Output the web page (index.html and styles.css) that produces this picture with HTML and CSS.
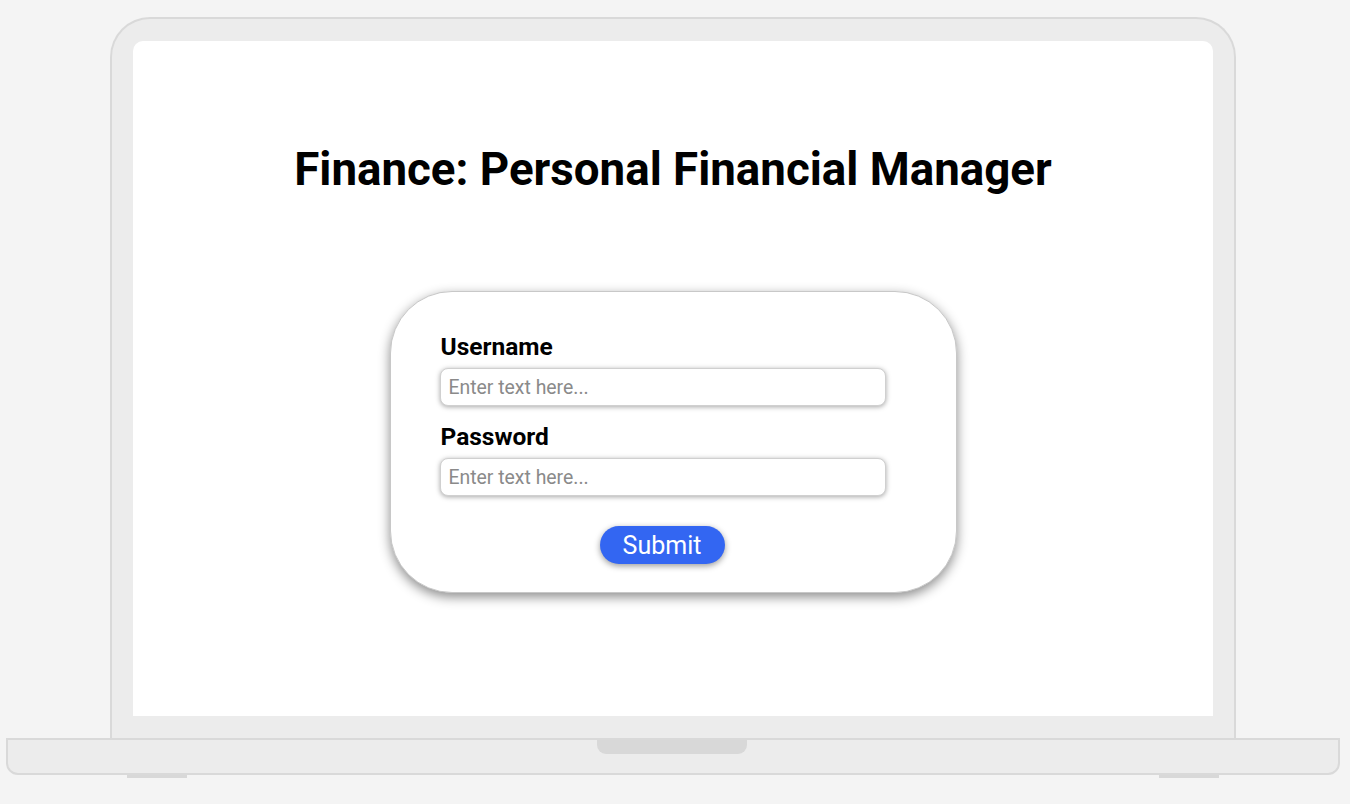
FILE: index.html
```html
<!DOCTYPE html>
<html>
<head>
<meta charset="utf-8">
<link rel="stylesheet" href="styles.css">
</head>
<body>
<div class="laptop">
  <div class="lid">
    <div class="screen">
      <h1 class="title">Finance: Personal Financial Manager</h1>
      <form class="card">
        <label class="label">Username</label>
        <input class="field" type="text" placeholder="Enter text here...">
        <label class="label">Password</label>
        <input class="field" type="password" placeholder="Enter text here...">
        <button class="submit" type="button">Submit</button>
      </form>
    </div>
  </div>
  <div class="base">
    <div class="notch"></div>
  </div>
  <div class="feet">
    <div class="foot"></div>
    <div class="foot"></div>
  </div>
</div>
</body>
</html>
```
FILE: styles.css
```css
html, body {
  margin: 0;
  padding: 0;
  background: #f4f4f4;
  font-family: Roboto, "Noto Sans", sans-serif;
}
.laptop {
  width: 1350px;
  height: 804px;
  padding-top: 17px;
  box-sizing: border-box;
  display: flex;
  flex-direction: column;
  align-items: flex-start;
}
.lid {
  margin-left: 110px;
  width: 1126px;
  height: 721px;
  box-sizing: border-box;
  background: #ececec;
  border: 2px solid #d9d9d9;
  border-bottom: none;
  border-radius: 40px 40px 0 0;
  padding: 22px 21px 0 21px;
}
.screen {
  background: #ffffff;
  height: 675px;
  border-radius: 10px 10px 0 0;
  display: flex;
  flex-direction: column;
  align-items: center;
}
.title {
  margin: 102px 0 0 0;
  font-size: 45.7px;
  font-weight: 700;
  line-height: 54px;
  color: #000;
}
.card {
  margin-top: 94px;
  width: 567px;
  height: 302px;
  box-sizing: border-box;
  background: #fff;
  border: 1px solid #c8c8c8;
  border-radius: 62px;
  box-shadow: 0 4px 12px rgba(0,0,0,0.45);
  padding: 41px 0 0 50px;
  display: flex;
  flex-direction: column;
  align-items: flex-start;
}
.label {
  font-size: 24.5px;
  font-weight: 700;
  line-height: 28px;
  color: #000;
}
.field {
  margin: 7px 0 17px -1px;
  width: 446px;
  height: 38px;
  box-sizing: border-box;
  border: 1px solid #d0d0d0;
  border-radius: 8px;
  box-shadow: 0 1px 5px rgba(0,0,0,0.35);
  padding: 0 8px;
  font-family: Roboto, sans-serif;
  font-size: 19.4px;
  color: #333;
  outline: none;
}
.field::placeholder {
  color: #8a8a8a;
}
.submit {
  margin: 13px 0 0 159px;
  width: 125px;
  height: 38px;
  border: none;
  border-radius: 19px;
  background: #3366f2;
  color: #fff;
  font-family: Roboto, sans-serif;
  font-size: 25px;
  box-shadow: 0 2px 6px rgba(0,0,0,0.4);
  padding: 0;
}
.base {
  margin-left: 6px;
  width: 1334px;
  height: 37px;
  box-sizing: border-box;
  background: #ececec;
  border: 2px solid #d9d9d9;
  border-radius: 0 0 12px 12px;
  display: flex;
  justify-content: center;
}
.notch {
  margin-left: -2px;
  width: 150px;
  height: 14px;
  background: #d8d8d8;
  border-radius: 0 0 9px 9px;
}
.feet {
  width: 1350px;
  display: flex;
  justify-content: space-between;
  padding: 0 131px 0 127px;
  box-sizing: border-box;
}
.foot {
  width: 60px;
  height: 3px;
  background: #d8d8d8;
}
```
